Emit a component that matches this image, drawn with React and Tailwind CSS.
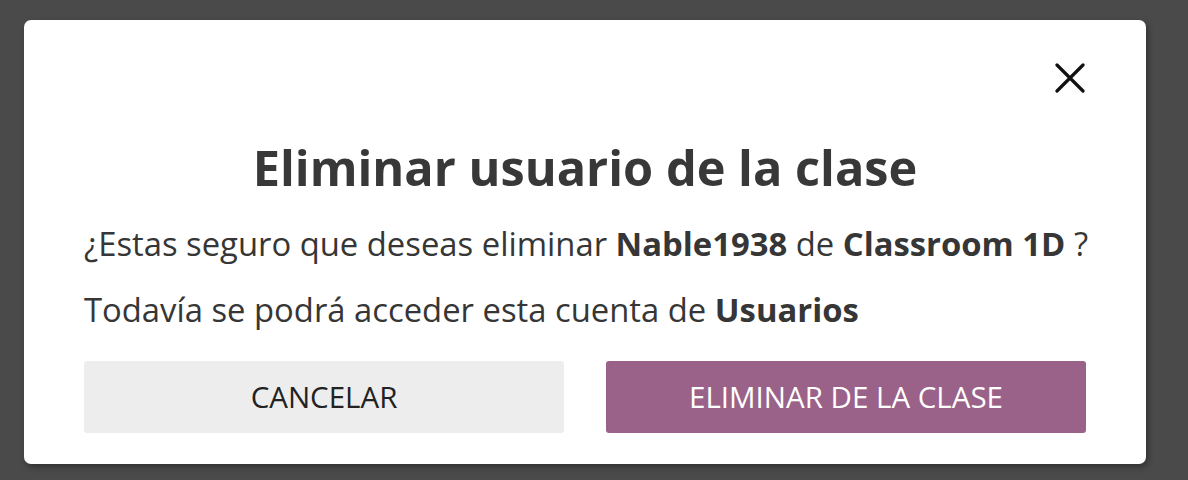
import React from "react";

const FONT = { fontFamily: '"Open Sans", "Noto Sans", sans-serif' };

function CloseIcon() {
  return (
    <svg width="30" height="30" viewBox="0 0 30 30" fill="none">
      <path
        d="M2 2L28 28M28 2L2 28"
        stroke="#111"
        strokeWidth="3.2"
        strokeLinecap="round"
      />
    </svg>
  );
}

export default function App() {
  return (
    <div
      className="h-[480px] w-[1188px] bg-[#4a4a4a] pt-[20px] pl-[24px]"
      style={FONT}
    >
      <div className="w-[1122px] h-[444px] bg-white rounded-[7px] shadow-[2px_3px_6px_rgba(0,0,0,0.35)] pt-[43px] px-[60px] flex flex-col">
        <div className="flex justify-end mr-[1px] h-[30px]">
          <button className="w-[30px] h-[30px] flex items-center justify-center">
            <CloseIcon />
          </button>
        </div>

        <h2 className="mt-[46px] text-center text-[48.7px] leading-[56px] font-bold text-[#383838]">
          Eliminar usuario de la clase
        </h2>

        <p className="mt-[29px] text-[32.8px] leading-[40px] text-[#363636] whitespace-nowrap">
          ¿Estas seguro que deseas eliminar <b className="font-bold">Nable1938</b> de{" "}
          <b className="font-bold">Classroom 1D</b> ?
        </p>
        <p className="mt-[26px] text-[32.8px] leading-[40px] text-[#363636] whitespace-nowrap">
          Todavía se podrá acceder esta cuenta de <b className="font-bold">Usuarios</b>
        </p>

        <div className="mt-[31px] grid grid-cols-2 gap-[42px]">
          <button className="h-[72px] rounded-[3px] bg-[#ededed] text-[#222] text-[29.5px] uppercase">
            Cancelar
          </button>
          <button className="h-[72px] rounded-[3px] bg-[#9a6189] text-white text-[29.5px] uppercase">
            Eliminar de la clase
          </button>
        </div>
      </div>
    </div>
  );
}
